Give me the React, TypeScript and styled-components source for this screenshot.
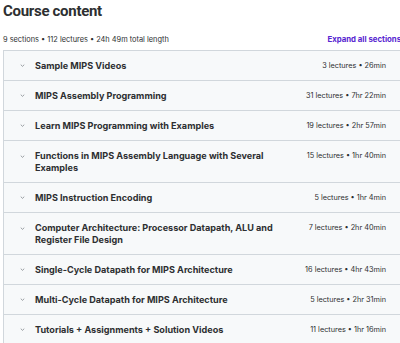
import React from 'react'
import styled, { createGlobalStyle } from 'styled-components'

const GlobalStyle = createGlobalStyle`
  html, body {
    margin: 0;
    padding: 0;
    background: #fff;
    overflow: hidden;
  }
  body {
    font-family: Inter, "Noto Sans", Arial, sans-serif;
    color: #2d2f31;
  }
`;

const Main = styled.main`
  width: 400px;
  height: 343px;
  padding: 3px 0 0 3px;
  box-sizing: border-box;
  overflow: hidden;

  h2 {
    margin: 0;
    font-family: Roboto, Inter, sans-serif;
    font-size: 15px;
    line-height: 17px;
    font-weight: 700;
    letter-spacing: -0.3px;
  }
`;

const Summary = styled.div`
  display: flex;
  align-items: center;
  justify-content: space-between;
  margin-top: 13px;
  height: 12px;
  font-size: 7.4px;

  b {
    color: #5624d0;
    font-weight: 700;
    font-size: 7.8px;
    margin-right: -1px;
  }
`;

const Panel = styled.div`
  margin-top: 5px;
  width: 410px;
  border: 1px solid #d1d7dc;
  border-bottom: none;
`;

const Section = styled.div<{ tall?: boolean }>`
  display: flex;
  align-items: ${p => p.tall ? 'flex-start' : 'center'};
  height: ${p => p.tall ? '42px' : '30px'};
  padding: ${p => p.tall ? '9px 28px 0 14px' : '0 28px 0 14px'};
  box-sizing: border-box;
  background: #f7f9fa;
  border-bottom: 1px solid #d1d7dc;
`;

const Chevron = styled.svg<{ tall?: boolean }>`
  flex: none;
  width: 7px;
  height: 7px;
  margin: ${p => p.tall ? '3px' : '0'} 9px 0 1px;
  color: #7d8287;
`;

const Title = styled.div`
  flex: 1;
  font-size: 9.1px;
  line-height: 12px;
  font-weight: 700;
  padding-right: 20px;
`;

const Meta = styled.div`
  flex: none;
  font-size: 7.3px;
  line-height: 12px;
  color: #2d2f31;
  white-space: nowrap;
`;

const sections = [
  { title: 'Sample MIPS Videos', meta: '3 lectures • 26min' },
  { title: 'MIPS Assembly Programming', meta: '31 lectures • 7hr 22min' },
  { title: 'Learn MIPS Programming with Examples', meta: '19 lectures • 2hr 57min' },
  { title: 'Functions in MIPS Assembly Language with Several Examples', meta: '15 lectures • 1hr 40min', tall: true },
  { title: 'MIPS Instruction Encoding', meta: '5 lectures • 1hr 4min' },
  { title: 'Computer Architecture: Processor Datapath, ALU and Register File Design', meta: '7 lectures • 2hr 40min', tall: true },
  { title: 'Single-Cycle Datapath for MIPS Architecture', meta: '16 lectures • 4hr 43min' },
  { title: 'Multi-Cycle Datapath for MIPS Architecture', meta: '5 lectures • 2hr 31min' },
  { title: 'Tutorials + Assignments + Solution Videos', meta: '11 lectures • 1hr 16min' },
]

function CourseContent() {
  return (
    <Main>
      <h2>Course content</h2>
      <Summary>
        <span>9 sections • 112 lectures • 24h 49m total length</span>
        <b>Expand all sections</b>
      </Summary>
      <Panel>
        {sections.map(s => (
          <Section key={s.title} tall={s.tall}>
            <Chevron viewBox="0 0 10 10" tall={s.tall}>
              <path d="M2.5 3.8 L5 6.2 L7.5 3.8" fill="none" stroke="currentColor" strokeWidth="1.1" />
            </Chevron>
            <Title>{s.title}</Title>
            <Meta>{s.meta}</Meta>
          </Section>
        ))}
      </Panel>
    </Main>
  )
}

export default function App() {
  return (
    <>
      <GlobalStyle />
      <CourseContent />
    </>
  )
}
